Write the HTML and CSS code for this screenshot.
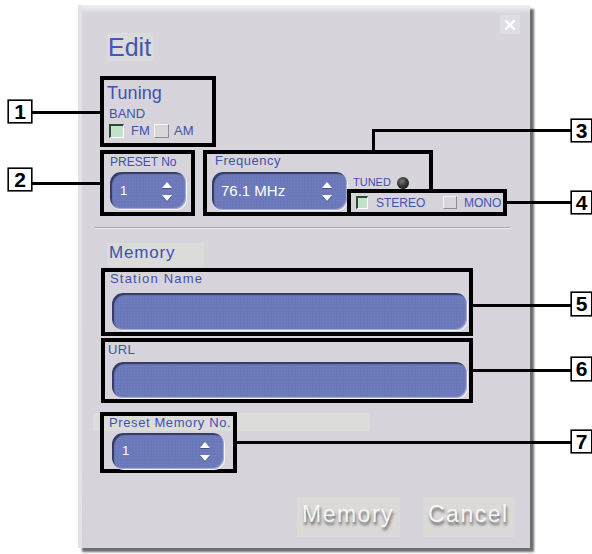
FILE: index.html
```html
<!DOCTYPE html>
<html lang="en">
<head>
<meta charset="utf-8">
<title>Edit</title>
<link rel="stylesheet" href="styles.css">
</head>
<body>
<div class="page">
  <div class="dialog">
    <button class="close" aria-label="Close">
      <svg width="10" height="10" viewBox="0 0 10 10"><path d="M1 1L9 9M9 1L1 9" stroke="#fff" stroke-width="2.4" stroke-linecap="square"/></svg>
    </button>
    <h1 class="title">Edit</h1>

    <section class="box box-tuning">
      <div class="group-title">Tuning</div>
      <div class="sub">BAND</div>
      <div class="checks">
        <span class="check on"></span><span class="clabel clabel-fm">FM</span>
        <span class="check"></span><span class="clabel clabel-am">AM</span>
      </div>
    </section>

    <div class="row">
      <section class="box box-preset">
        <div class="label">PRESET No</div>
        <div class="spin spin-preset">
          <span class="val">1</span>
          <svg class="arrows" width="12" height="20" viewBox="0 0 12 20"><polygon points="6,0 11,6 1,6" fill="#fff"/><polygon points="1,13 11,13 6,19" fill="#fff"/></svg>
        </div>
      </section>
      <section class="box box-freq">
        <div class="label label-freq">Frequency</div>
        <div class="freq-row">
          <div class="spin spin-freq">
            <span class="val val-freq">76.1 MHz</span>
            <svg class="arrows" width="12" height="20" viewBox="0 0 12 20"><polygon points="6,0 11,6 1,6" fill="#fff"/><polygon points="1,13 11,13 6,19" fill="#fff"/></svg>
          </div>
          <div class="tuned">TUNED<span class="led"></span></div>
        </div>
        <div class="box box-mode">
          <span class="check check-sm on"></span><span class="mlabel mlabel-stereo">STEREO</span>
          <span class="check check-sm check-mono"></span><span class="mlabel">MONO</span>
        </div>
      </section>
    </div>

    <div class="sep"></div>

    <div class="section-title">Memory</div>

    <section class="box box-field box-station">
      <div class="label label-wide">Station Name</div>
      <div class="field field-station"></div>
    </section>

    <section class="box box-field box-url">
      <div class="label label-url">URL</div>
      <div class="field field-url"></div>
    </section>

    <div class="memno-row">
      <section class="box box-memno">
        <div class="label label-memno">Preset Memory No.</div>
        <div class="spin spin-memno">
          <span class="val">1</span>
          <svg class="arrows" width="12" height="20" viewBox="0 0 12 20"><polygon points="6,0 11,6 1,6" fill="#fff"/><polygon points="1,13 11,13 6,19" fill="#fff"/></svg>
        </div>
      </section>
    </div>

    <div class="buttons">
      <button class="btn btn-memory">Memory</button>
      <button class="btn btn-cancel">Cancel</button>
    </div>
  </div>

  <div class="lead lead1"></div>
  <div class="num num1">1</div>
  <div class="lead lead2"></div>
  <div class="num num2">2</div>
  <div class="lead lead3v"></div>
  <div class="lead lead3h"></div>
  <div class="num num3">3</div>
  <div class="lead lead4"></div>
  <div class="num num4">4</div>
  <div class="lead lead5"></div>
  <div class="num num5">5</div>
  <div class="lead lead6"></div>
  <div class="num num6">6</div>
  <div class="lead lead7"></div>
  <div class="num num7">7</div>
</div>
</body>
</html>
```

FILE: styles.css
```css
* { box-sizing: border-box; }

html, body {
  margin: 0;
  padding: 0;
  background: #ffffff;
}

body {
  font-family: "Liberation Sans", Arial, sans-serif;
  color: #4051ad;
}

.page {
  position: relative;
  width: 592px;
  height: 554px;
  overflow: hidden;
  background: #ffffff;
}

/* ---------- dialog window ---------- */
.dialog {
  position: absolute;
  left: 78px;
  top: 5px;
  width: 452px;
  height: 543px;
  padding: 28px 0 0 22px;
  background: linear-gradient(#efeef0 0, #e4e2e6 5px, #d8d4db 9px, #d7d3da 100%);
  box-shadow: inset 4px 0 0 #e4e2e6, 4px 4px 2px 0 rgba(60, 60, 60, 0.75);
}

.close {
  position: absolute;
  left: 422px;
  top: 10px;
  width: 20px;
  height: 19px;
  padding: 0;
  border: 0;
  background: #dfdee2;
  display: flex;
  align-items: center;
  justify-content: center;
}

.title {
  margin: 0 0 0 7px;
  width: fit-content;
  height: 28px;
  padding: 0 3px 0 1px;
  font-size: 25px;
  line-height: 28px;
  font-weight: normal;
  color: #4557ae;
  background: #dbdbdb;
}

/* ---------- annotation group boxes ---------- */
.box {
  border: 4px solid #000;
}

.box-tuning {
  margin-top: 15px;
  width: 116px;
  height: 71px;
  padding: 3px 0 0 3px;
}

.group-title {
  font-size: 18px;
  line-height: 20px;
  letter-spacing: 0.1px;
}

.sub {
  margin: 3px 0 0 2px;
  font-size: 13px;
  line-height: 15px;
}

.checks {
  margin: 3px 0 0 2px;
  display: flex;
  align-items: center;
  height: 14px;
  font-size: 13px;
  line-height: 14px;
}

.check {
  display: inline-block;
  width: 15px;
  height: 14px;
  background: #d9d7da;
  border: 1px solid;
  border-color: #f4f4f4 #8e8e8e #8e8e8e #f4f4f4;
}

.check.on {
  background: #c2e2c9;
  border-width: 2px 1px 1px 2px;
  border-color: #2d4a34 #ffffff #ffffff #2d4a34;
}

.clabel { display: inline-block; }
.clabel-fm { width: 30px; padding-left: 7px; }
.clabel-am { padding-left: 5px; }

.row {
  display: flex;
  gap: 8px;
  margin-top: 3px;
}

.label {
  font-size: 12px;
  line-height: 14px;
}

.box-preset {
  width: 95px;
  height: 66px;
  padding: 1px 0 0 6px;
}

.box-freq {
  position: relative;
  width: 230px;
  height: 66px;
}

.label-freq {
  margin-left: 8px;
  font-size: 13px;
  letter-spacing: 0.5px;
}

.freq-row {
  display: flex;
  margin-top: 4px;
}

/* ---------- blue spinners / fields ---------- */
.spin, .field {
  background-color: #6b78b9;
  background-image: radial-gradient(rgba(255, 255, 255, 0.07) 0.6px, transparent 0.9px);
  background-size: 3px 3px;
  border-radius: 11px;
  box-shadow: inset 2px 2px 1px #353a62, inset -1px -1px 1px #a7aedb, 1px 1px 0 #f6f6f6;
}

.spin {
  display: flex;
  align-items: center;
  justify-content: space-between;
  padding: 0 13px 0 10px;
  color: #ffffff;
}

.spin .val {
  font-size: 13px;
  line-height: 16px;
}

.arrows {
  margin-top: 2px;
  filter: drop-shadow(0 1px 0 #4b5080);
}

.spin-preset {
  margin-top: 3px;
  width: 76px;
  height: 37px;
}

.spin-freq {
  margin-left: 5px;
  width: 135px;
  height: 38px;
  padding-left: 9px;
  padding-right: 14px;
}

.val-freq {
  font-size: 15px !important;
}

.tuned {
  margin: 4px 0 0 6px;
  display: flex;
  align-items: center;
  height: 13px;
  font-size: 11px;
  line-height: 13px;
}

.led {
  display: inline-block;
  width: 12px;
  height: 12px;
  margin-left: 6px;
  border-radius: 50%;
  background: radial-gradient(circle at 40% 35%, #7a7a7a 0, #2a2a2a 55%, #141414 100%);
}

.box-mode {
  position: absolute;
  left: 140px;
  top: 35px;
  width: 160px;
  height: 27px;
  padding: 3px 0 0 5px;
  background: #d7d3da;
  display: flex;
  align-items: flex-start;
  font-size: 12px;
  line-height: 13px;
}

.check-sm {
  width: 12px;
  height: 13px;
}

.check-mono {
  width: 14px;
}

.mlabel {
  padding-left: 7px;
  line-height: 14px;
}

.mlabel-stereo {
  width: 75px;
  padding-left: 8px;
}

/* ---------- memory section ---------- */
.sep {
  margin: 11px 0 0 -5px;
  width: 415px;
  height: 2px;
  border-top: 1px solid #aba7ae;
  border-bottom: 1px solid #eeecef;
}

.section-title {
  margin: 14px 0 0 7px;
  width: 97px;
  height: 23px;
  padding-left: 2px;
  font-size: 17px;
  line-height: 19px;
  letter-spacing: 0.8px;
  background: #dbdbd9;
}

.box-field {
  margin-left: 1px;
  width: 372px;
}

.box-station {
  margin-top: 2px;
  height: 68px;
  padding-left: 5px;
}

.label-wide {
  font-size: 13px;
  letter-spacing: 1.2px;
}

.field-station {
  margin: 7px 0 0 2px;
  width: 355px;
  height: 37px;
}

.box-url {
  margin-top: 2px;
  height: 65px;
  padding: 1px 0 0 3px;
}

.label-url {
  font-size: 13px;
  letter-spacing: 0.3px;
}

.field-url {
  margin: 5px 0 0 4px;
  width: 355px;
  height: 36px;
}

.memno-row {
  margin: 9px 0 0 -7px;
  padding-left: 7px;
  background: linear-gradient(#dcdcda, #dcdcda) no-repeat 0 1px / 277px 18px;
}

.box-memno {
  width: 137px;
  height: 61px;
  padding-left: 5px;
}

.label-memno {
  font-size: 13px;
  letter-spacing: 0.6px;
}

.spin-memno {
  margin: 3px 0 0 3px;
  width: 112px;
  height: 36px;
}

/* ---------- buttons ---------- */
.buttons {
  margin-top: 24px;
  padding-right: 15px;
  display: flex;
  justify-content: flex-end;
  gap: 23px;
}

.btn {
  height: 40px;
  padding: 4px 0 0 5px;
  border: 0;
  text-align: left;
  background: #dbdad8;
  font-family: "Liberation Sans", Arial, sans-serif;
  font-size: 23px;
  line-height: 26px;
  letter-spacing: 1.5px;
  color: #f6f6f6;
  text-shadow: 1px 3px 3px rgba(60, 60, 60, 0.8);
  align-self: flex-start;
  display: flex;
  align-items: flex-start;
}

.btn-memory { width: 103px; }
.btn-cancel { width: 92px; }

/* ---------- callouts ---------- */
.lead {
  position: absolute;
  background: #000;
  height: 3px;
}

.lead1 { left: 32px; top: 111px; width: 68px; }
.lead2 { left: 32px; top: 182px; width: 68px; }
.lead3v { left: 372px; top: 129px; width: 3px; height: 21px; }
.lead3h { left: 372px; top: 129px; width: 200px; }
.lead4 { left: 507px; top: 201px; width: 64px; }
.lead5 { left: 473px; top: 304px; width: 98px; }
.lead6 { left: 473px; top: 369px; width: 98px; }
.lead7 { left: 237px; top: 441px; width: 334px; }

.num {
  position: absolute;
  width: 21px;
  height: 23px;
  border: 1px solid #000;
  box-shadow: 0 0 0 0.6px #000;
  background: #fff;
  color: #000;
  font-family: "Liberation Sans", Arial, sans-serif;
  font-weight: bold;
  font-size: 21px;
  line-height: 21px;
  text-align: center;
}

.num1 { left: 8px; top: 100px; width: 24px; }
.num2 { left: 8px; top: 168px; width: 24px; }
.num3 { left: 571px; top: 119px; }
.num4 { left: 571px; top: 191px; }
.num5 { left: 571px; top: 292px; height: 24px; }
.num6 { left: 571px; top: 357px; height: 24px; }
.num7 { left: 571px; top: 430px; }
```
